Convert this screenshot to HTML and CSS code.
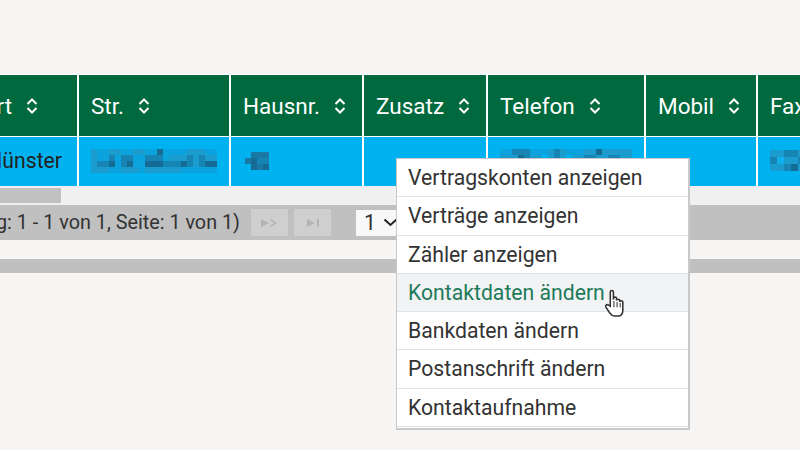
FILE: index.html
```html
<!doctype html>
<html>
<head>
<meta charset="UTF-8">
<title>Kunden</title>
<link rel="stylesheet" href="styles.css">
</head>
<body>
<div class="page">
  <div class="kunden_table">
    <div class="head first"><span>Ort</span><svg class="sort" viewBox="0 0 12 18"><path d="M1.500 7L6 2.500 10.500 7M1.500 11L6 15.500 10.500 11"/></svg></div>
    <div class="head"><span>Str.</span><svg class="sort" viewBox="0 0 12 18"><path d="M1.500 7L6 2.500 10.500 7M1.500 11L6 15.500 10.500 11"/></svg></div>
    <div class="head"><span>Hausnr.</span><svg class="sort" viewBox="0 0 12 18"><path d="M1.500 7L6 2.500 10.500 7M1.500 11L6 15.500 10.500 11"/></svg></div>
    <div class="head"><span>Zusatz</span><svg class="sort" viewBox="0 0 12 18"><path d="M1.500 7L6 2.500 10.500 7M1.500 11L6 15.500 10.500 11"/></svg></div>
    <div class="head"><span>Telefon</span><svg class="sort" viewBox="0 0 12 18"><path d="M1.500 7L6 2.500 10.500 7M1.500 11L6 15.500 10.500 11"/></svg></div>
    <div class="head"><span>Mobil</span><svg class="sort" viewBox="0 0 12 18"><path d="M1.500 7L6 2.500 10.500 7M1.500 11L6 15.500 10.500 11"/></svg></div>
    <div class="head"><span>Fax</span></div>

    <div class="cell first">Münster</div>
    <div class="cell">
      <svg class="mosaic" width="126" height="24" viewBox="0 0 21 4">
        <path class="m0" d="M0 0h21v4H0z"/>
        <path class="m1" d="M0 0h1v4H0zM3 0h2v1H3zM7 0h2v1H7zM13 1h3v1h-3zM19 1h2v2h-2zM9 3h6v1H9zM1 3h2v1H1zM16 0h3v1h-3zM5 3h3v1H5zM17 1h1v2h-1z"/>
        <path class="m2" d="M1 2h2v1H1zM5 1h2v2H5zM9 1h3v1H9zM12 2h3v1h-3zM16 1h1v2h-1zM18 1h1v2h-1zM3 1h1v1H3z"/>
        <path class="m3" d="M3 2h1v1H3zM6 2h1v1H6zM11 0h1v1h-1zM9 2h3v1H9zM15 2h1v1h-1zM19 2h2v1h-2z"/>
      </svg>
    </div>
    <div class="cell">
      <svg class="mosaic house" width="24" height="18" viewBox="0 0 4 3">
        <path class="m5" d="M1 0h3v3H1zM0 1h1v1H0z"/>
        <path class="m3" d="M1 1h1v2H1zM3 2h1v1H3z"/>
        <path class="m2" d="M2 1h2v1H2z"/>
      </svg>
    </div>
    <div class="cell"></div>
    <div class="cell">
      <svg class="mosaic tel" width="132" height="24" viewBox="0 0 22 4">
        <path class="m0" d="M0 0h22v1H0z"/>
        <path class="m1" d="M0 1h7v1H0zM8 0h3v2H8zM12 1h10v1H12zM14 0h8v1h-8z"/>
        <path class="m2" d="M2 0h3v1H2zM9 0h1v2H9zM14 1h2v1h-2zM18 1h2v1h-2zM3 1h2v1H3z"/>
        <path class="m3" d="M3 1h1v1H3zM16 0h1v1h-1z"/>
      </svg>
    </div>
    <div class="cell"></div>
    <div class="cell">
      <svg class="mosaic" width="42" height="21" viewBox="0 0 6 3">
        <path class="m1" d="M0 0h6v3H0z"/>
        <path class="m2" d="M0 1h1v1H0zM2 0h2v1H2zM2 2h2v1H2zM4 1h2v1H4z"/>
        <path class="m3" d="M3 2h1v1H3zM5 0h1v3H5z"/>
        <path class="m4" d="M1 1h1v1H1z"/>
      </svg>
    </div>
  </div>

  <div class="scroll_track"><div class="scroll_thumb"></div></div>

  <div class="pager">
    <div class="pager_group">
      <div class="pager_text">(Eintrag: 1 - 1 von 1, Seite: 1 von 1)</div>
      <button class="pager_btn">
        <svg width="18" height="10" viewBox="0 0 18 10"><path d="M0 1l8 4-8 4zM10 1l6 4-6 4-1-1 4-3-4-3z"/></svg>
      </button>
      <button class="pager_btn">
        <svg width="14" height="10" viewBox="0 0 14 10"><path d="M1 1l8 4-8 4zM11 1h2v8h-2z"/></svg>
      </button>
      <div class="page_select">1<svg width="15" height="9" viewBox="0 0 15 9"><path d="M1.500 1.500L7.500 7l6-5.500"/></svg></div>
    </div>
  </div>
  <div class="bottom_bar"></div>
</div>

<ul class="context_menu">
  <li>Vertragskonten anzeigen</li>
  <li>Verträge anzeigen</li>
  <li>Zähler anzeigen</li>
  <li class="active">Kontaktdaten ändern</li>
  <li>Bankdaten ändern</li>
  <li>Postanschrift ändern</li>
  <li>Kontaktaufnahme</li>
</ul>

<svg class="hand" width="23" height="30" viewBox="0 0 22 28">
  <path d="M6 17V3.500C6 1.600 9 1.600 9 3.500V11V9.500C9 8 12 8 12 9.500V11.500C12 10 15 10 15 11.500V13C15 11.500 18 11.500 18 13V21C18 24 16.500 26.500 13.500 26.500H10C8 26.500 7 25.500 5.500 23.500L1.800 18C.8 16.300 3 14.800 4.300 16z"/>
  <path class="lines" d="M9.500 12v6M12.500 13v5M15.500 14v4"/>
</svg>
</body>
</html>
```

FILE: styles.css
```css
body {
    margin: 0;
    height: 450px;
    overflow: hidden;
    background: #f6f5f3;
    font-family: "Roboto", "Liberation Sans", sans-serif;
    font-size: 21.200px;
    color: #333;
}
.page {
    padding-top: 74px;
}
.kunden_table {
    display: grid;
    grid-template-columns: 77px 150px 131px 122px 156px 110px 60px;
    grid-template-rows: 61px 49px;
    column-gap: 2px;
    row-gap: 1px;
    width: 830px;
    background: #fff;
    border-top: 1px solid #fff;
}
.head {
    display: flex;
    align-items: center;
    gap: 14px;
    padding-left: 12px;
    background: #00693e;
    color: #fff;
    font-size: 22.500px;
    white-space: nowrap;
    overflow: hidden;
}
.head.first {
    justify-content: flex-end;
    padding: 0 39px 0 0;
}
.sort {
    width: 12px;
    height: 18px;
    flex: none;
    fill: none;
    stroke: #fff;
    stroke-width: 2;
}
.cell {
    display: flex;
    align-items: center;
    padding: 0 0 2px 12px;
    background: #00b2ef;
    color: #222;
    white-space: nowrap;
    overflow: hidden;
}
.cell.first {
    justify-content: flex-end;
    padding: 0 15px 2px 0;
}
.mosaic {
    flex: none;
    shape-rendering: crispEdges;
}
.house {
    margin-left: 2px;
}
.m0 { fill: #0aa3dd; }
.m1 { fill: #1a9ccf; }
.m2 { fill: #1685b3; }
.m3 { fill: #146c96; }
.m4 { fill: #10b0ec; }
.m5 { fill: #1a78a5; }
.scroll_track {
    height: 19px;
    background: #f0f0f0;
    padding-top: 2px;
    box-sizing: border-box;
}
.scroll_thumb {
    width: 61px;
    height: 15px;
    background: #c1c1c1;
}
.pager {
    height: 35px;
    background: #c0c0c0;
}
.pager_group {
    display: flex;
    align-items: center;
    justify-content: flex-end;
    width: 396px;
    height: 35px;
    white-space: nowrap;
    overflow: hidden;
}
.pager_text {
    flex: none;
    margin-right: 11px;
    font-size: 19.800px;
}
.pager_btn {
    display: flex;
    align-items: center;
    justify-content: center;
    flex: none;
    width: 37px;
    height: 27px;
    margin-right: 6px;
    padding: 0;
    border: 0;
    background: #cfcfcf;
}
.pager_btn svg {
    fill: #b4b4b4;
}
.page_select {
    display: flex;
    align-items: center;
    flex: none;
    gap: 7px;
    box-sizing: border-box;
    width: 40px;
    height: 26px;
    margin-left: 19px;
    padding-left: 8px;
    background: #f8f8f8;
}
.page_select svg {
    flex: none;
    fill: none;
    stroke: #222;
    stroke-width: 2;
}
.bottom_bar {
    height: 14px;
    margin-top: 19px;
    background: #c0c0c0;
}
.context_menu {
    position: absolute;
    left: 396px;
    top: 158px;
    width: 294px;
    height: 272px;
    box-sizing: border-box;
    margin: 0;
    padding: 0;
    list-style: none;
    background: #fff;
    border: 1px solid #c9c9c9;
    border-right-width: 2px;
    border-bottom-width: 2px;
}
.context_menu li {
    height: 38.300px;
    box-sizing: border-box;
    padding-left: 11px;
    line-height: 38px;
    border-bottom: 1px solid #dfe3ea;
}
.context_menu .active {
    background: #f1f3f5;
    color: #1e7a5a;
}
.hand {
    position: absolute;
    left: 604px;
    top: 288px;
    fill: #fff;
    stroke: #333;
    stroke-width: 1.500;
}
.hand .lines {
    stroke-width: 1;
}
```
